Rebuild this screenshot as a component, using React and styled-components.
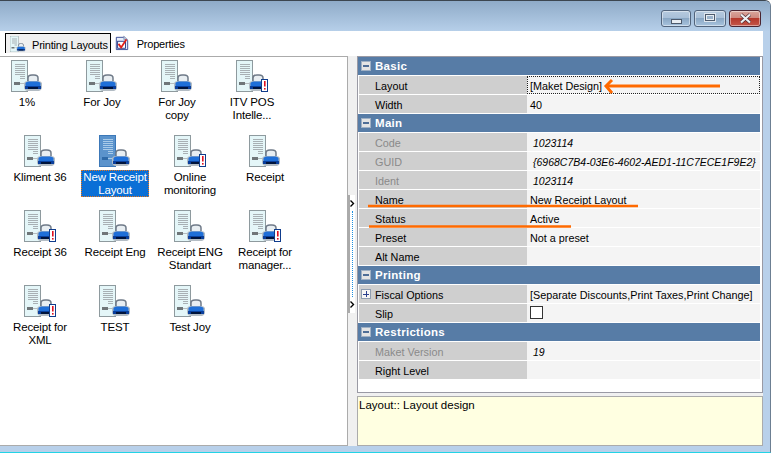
import React from 'react'
import styled, { createGlobalStyle } from 'styled-components'

const Global = createGlobalStyle`
  html, body { margin: 0; padding: 0; background: #fff; }
  body { font-family: 'Liberation Sans', Arial, sans-serif; font-size: 11.5px; color: #000; }
`

const Window = styled.div`
  width: 771px;
  height: 453px;
  position: relative;
  overflow: hidden;
  display: flex;
  flex-direction: column;
  background: #b8d0ea;
  border-top: 1px solid #3c4650;
  border-right: 1px solid #6c7f92;
  border-top-right-radius: 6px;
  box-sizing: border-box;
  border-bottom: 1px solid #22d3e6;
`

const TitleBar = styled.div`
  height: 30px;
  flex: none;
  display: flex;
  justify-content: flex-end;
  align-items: flex-start;
  padding: 9px 9px 0 0;
  box-sizing: border-box;
  gap: 3px;
  background: linear-gradient(#8fabc8, #b6cfe9);
`

const CaptionButton = styled.div`
  width: ${(p) => (p.$narrow ? 30 : 32)}px;
  height: 17px;
  box-sizing: border-box;
  border: 1px solid ${(p) => (p.$close ? '#4a2430' : '#52647c')};
  border-radius: 3px;
  display: flex;
  align-items: center;
  justify-content: center;
  box-shadow: inset 0 0 0 1px rgba(255, 255, 255, 0.45);
  background: ${(p) =>
    p.$close
      ? 'linear-gradient(#d9a69c 0%, #cf8a80 45%, #b5392c 50%, #c4574a 100%)'
      : 'linear-gradient(#b6cade 0%, #a9c0d8 45%, #8aa7c4 50%, #a8c3de 100%)'};
`

const MinGlyph = styled.span`
  width: 9px;
  height: 3px;
  margin-top: 5px;
  background: #e8edf2;
  border: 1px solid #4d5a6c;
`

const MaxGlyph = styled.span`
  width: 8px;
  height: 5px;
  border: 1px solid #4d5a6c;
  outline: 1px solid #e8edf2;
  outline-offset: -2px;
  box-shadow: 0 0 0 1px #dfe6ee;
  margin-bottom: 2px;
  background: #9cb3cb;
`

const CloseGlyph = styled.svg`
  width: 13px;
  height: 11px;
`

const Content = styled.div`
  width: 763px;
  height: 415px;
  flex: none;
  background: #fff;
  display: flex;
  flex-direction: column;
`

const TabStrip = styled.div`
  height: 22px;
  flex: none;
  display: flex;
  align-items: flex-end;
  padding-left: 5px;
  border-bottom: 3px solid;
  border-image: linear-gradient(#000 0 33%, #fff 33%) 3;
  box-sizing: content-box;
`

const Tab = styled.div`
  height: 20px;
  box-sizing: border-box;
  display: flex;
  align-items: center;
  gap: 6px;
  padding: 0 ${(p) => (p.$active ? 2 : 0)}px 0 4px;
  background: ${(p) => (p.$active ? '#f0f0f0' : 'transparent')};
  border: ${(p) => (p.$active ? '1px solid #000' : 'none')};
  border-bottom: none;
`

const TabLabel = styled.span`
  font-size: 11px;
  letter-spacing: -0.2px;
  padding-top: 2px;
  margin-left: ${(p) => p.$gap || 0}px;
`

const Body = styled.div`
  flex: 1;
  min-height: 0;
  display: flex;
  background: #f0f0f0;
`

const ListPanel = styled.div`
  width: 349px;
  flex: none;
  box-sizing: border-box;
  background: #fff;
  border: 1px solid #ababab;
  padding-top: 3px;
  display: flex;
  flex-direction: column;
  margin-left: -1px;
`

const IconRow = styled.div`
  height: 75px;
  flex: none;
  display: flex;
  gap: 23px;
  padding-left: ${(p) => p.$inset}px;
`

const Item = styled.div`
  width: 52px;
  display: flex;
  flex-direction: column;
  align-items: center;
`

const Label = styled.div`
  margin-top: 3px;
  width: max-content;
  flex: none;
  text-align: center;
  line-height: 13px;
  white-space: pre-line;
  font-size: 11.5px;
  letter-spacing: -0.15px;
  padding: 1px 2px 0;
  ${(p) =>
    p.$selected &&
    `
    background: #0a6fd6;
    color: #fff;
    outline: 1px dotted #e8761a;
    outline-offset: -1px;
  `}
`

const Splitter = styled.div`
  width: 9px;
  flex: none;
  display: flex;
  align-items: stretch;
  padding: 139px 2px 133px 0;
  box-sizing: border-box;
`

const SplitterTrack = styled.div`
  flex: 1;
  box-sizing: border-box;
  padding: 5px 0;
  display: flex;
  flex-direction: column;
  align-items: center;
  justify-content: space-between;
  border-left: 2px solid #ababab;
  background: #fff;
`

const SplitterDots = styled.div`
  flex: 1;
  width: 1px;
  margin: 4px 0;
  border-left: 1px dotted #1e8fe0;
`

const Chevron = styled.svg`
  width: 5px;
  height: 7px;
  flex: none;
`

const RightPanel = styled.div`
  flex: 1;
  min-width: 0;
  display: flex;
  flex-direction: column;
  gap: 3px;
`

const Grid = styled.div`
  height: 337px;
  flex: none;
  box-sizing: border-box;
  background: #fff;
  border: 1px solid #9a9aa4;
  padding: 0 2px 0 0;
`

const SectionRow = styled.div`
  height: 18px;
  margin-bottom: 1px;
  background: #577ca6;
  display: flex;
  align-items: center;
  gap: 4px;
  padding-left: 3px;
  color: #fff;
  font-weight: 700;
  font-size: 11.5px;
  letter-spacing: 0.3px;
  line-height: 19px;
`

const ToggleBox = styled.span`
  width: 8px;
  height: 8px;
  box-sizing: content-box;
  border: 1px solid ${(p) => (p.$light ? '#8f9db0' : '#9fb0c4')};
  background: ${(p) => (p.$light ? '#f6f6f6' : '#e4e4e4')};
  display: inline-flex;
  align-items: center;
  justify-content: center;
  position: relative;
  flex: none;
  &::before {
    content: '';
    width: 6px;
    height: 2px;
    background: ${(p) => (p.$light ? '#2a3f8f' : '#4e6d96')};
  }
  ${(p) =>
    p.$plus &&
    `
    margin-top: -2px;
    &::after {
      content: '';
      position: absolute;
      left: 4px;
      top: 1px;
      width: 1px;
      height: 6px;
      background: #2a3f8f;
    }
    &::before { height: 1px; }
  `}
`

const PropRow = styled.div`
  height: 18px;
  margin-bottom: 1px;
  display: flex;
  line-height: 16px;
  font-size: 10.8px;
`

const PropName = styled.div`
  width: 168px;
  flex: none;
  box-sizing: border-box;
  margin-left: 1px;
  padding: 2px 0 0 ${(p) => (p.$expand ? 2 : 16)}px;
  background: #cfcfcf;
  color: ${(p) => (p.$muted ? '#8a8a8a' : '#000')};
  display: flex;
  align-items: center;
  gap: 4px;
`

const PropValue = styled.div`
  flex: 1;
  min-width: 0;
  box-sizing: border-box;
  background: #f4f4f4;
  white-space: nowrap;
  padding-top: 2px;
  font-style: ${(p) => (p.$italic ? 'italic' : 'normal')};
  font-size: ${(p) => (p.$italic ? 10.5 : 10.8)}px;
  padding-left: ${(p) => (p.$italic ? 6 : 3)}px;
  ${(p) => p.$focused && 'outline: 1px dotted #222; outline-offset: -1px;'}
`

const CheckBox = styled.span`
  display: block;
  width: 11px;
  height: 11px;
  border: 1px solid #333;
  background: #fff;
`

const Description = styled.div`
  height: 50px;
  flex: none;
  box-sizing: border-box;
  background: #ffffe1;
  border: 1px solid #ababab;
  padding: 1px 1px;
  font-size: 11.5px;
  line-height: 14px;
`

const Annotation = styled.svg`
  position: absolute;
  left: 0;
  top: -1px;
  width: 771px;
  height: 453px;
  pointer-events: none;
`

/* report page + printer picture used for every layout in the list */
const LayoutIcon = ({ selected, badge, size = 32 }) => (
  <svg width={size} height={size} viewBox="0 0 32 32" style={{ flex: 'none', display: 'block' }}>
    <rect x="0.5" y="0.5" width="16" height="31" fill={selected ? '#6f9fd0' : '#d6f2f6'} stroke={selected ? '#3c78b8' : '#8e9a9e'} />
    <rect x="1" y="1" width="15" height="30" fill={selected ? '#5b93cc' : '#e4f6f8'} />
    {[4, 6, 8, 10, 12, 14, 16, 18].map((y, i) => (
      <rect key={y} x={i > 5 ? 9 : 4} y={y} width={i > 5 ? 5 : 10} height="1" fill={selected ? '#a9cbe9' : '#a8b0b4'} />
    ))}
    <rect x="3" y="22" width="6" height="3" fill={selected ? '#2f6aa8' : '#6f7679'} />
    <rect x="9" y="23" width="6" height="1" fill={selected ? '#a9cbe9' : '#b5bcbf'} />
    <path d="M17 21 v-3 q0-3 4-3 h2 q4 0 4 3 v3" fill="#e8eef2" stroke="#6f7a88" strokeWidth="1.5" />
    <path d="M13 23 q1-2 4-2 h10 q3 0 4 2 v5 q-1 3-3 3 h-12 q-2 0-3-3 z" fill="#b3bcc4" />
    <path d="M14.5 23 q1-1.5 3-1.5 h9 q2 0 3 1.5 v3 h-15 z" fill="#1f6fd8" />
    <rect x="14" y="26" width="16" height="3" fill="#0a3f9c" />
    <rect x="17" y="27" width="10" height="2" fill="#00143c" />
    {badge && (
      <g>
        <rect x="25.5" y="19.5" width="6" height="12" fill="#fff" stroke="#0f3c8c" />
        <rect x="28" y="21" width="1.6" height="5.5" fill="#e01020" />
        <rect x="28" y="28" width="1.6" height="1.6" fill="#e01020" />
      </g>
    )}
  </svg>
)

const PropertiesIcon = () => (
  <svg width="14" height="16" viewBox="0 0 16 18" style={{ flex: 'none' }}>
    <path d="M1.5 2.5 H10 L14.5 6 V16.5 H1.5 Z" fill="#e8eefa" stroke="#2a3f8f" />
    <path d="M10 1 L14.5 5 H10 Z" fill="#b8c4dc" stroke="#6d7ca0" strokeWidth="0.6" />
    <rect x="3" y="7" width="9" height="8" fill="#fff" stroke="#1c2f80" />
    <path d="M4 10 L7 14 L13 5" fill="none" stroke="#e0201a" strokeWidth="2" />
  </svg>
)

const ROWS = [
  {
    inset: 1,
    items: [
      { label: '1%' },
      { label: 'For Joy' },
      { label: 'For Joy\ncopy' },
      { label: 'ITV POS\nIntelle...', badge: true },
    ],
  },
  {
    inset: 14,
    items: [
      { label: 'Kliment 36' },
      { label: 'New Receipt\nLayout', selected: true },
      { label: 'Online\nmonitoring', badge: true },
      { label: 'Receipt' },
    ],
  },
  {
    inset: 14,
    items: [
      { label: 'Receipt 36', badge: true },
      { label: 'Receipt Eng' },
      { label: 'Receipt ENG\nStandart' },
      { label: 'Receipt for\nmanager...', badge: true },
    ],
  },
  {
    inset: 14,
    items: [{ label: 'Receipt for\nXML', badge: true }, { label: 'TEST' }, { label: 'Test Joy' }],
  },
]

const SECTIONS = [
  {
    title: 'Basic',
    rows: [
      { name: 'Layout', value: '[Maket Design]', focused: true },
      { name: 'Width', value: '40' },
    ],
  },
  {
    title: 'Main',
    rows: [
      { name: 'Code', value: '1023114', muted: true, italic: true },
      { name: 'GUID', value: '{6968C7B4-03E6-4602-AED1-11C7ECE1F9E2}', muted: true, italic: true },
      { name: 'Ident', value: '1023114', muted: true, italic: true },
      { name: 'Name', value: 'New Receipt Layout' },
      { name: 'Status', value: 'Active' },
      { name: 'Preset', value: 'Not a preset' },
      { name: 'Alt Name', value: '' },
    ],
  },
  {
    title: 'Printing',
    rows: [
      { name: 'Fiscal Options', value: '[Separate Discounts,Print Taxes,Print Change]', expand: true },
      { name: 'Slip', check: true },
    ],
  },
  {
    title: 'Restrictions',
    rows: [
      { name: 'Maket Version', value: '19', muted: true, italic: true },
      { name: 'Right Level', value: '' },
    ],
  },
]

const ChevronIcon = () => (
  <Chevron viewBox="0 0 5 7">
    <path d="M0.5 0.5 L3.5 3.5 L0.5 6.5" fill="none" stroke="#000" strokeWidth="1.4" />
  </Chevron>
)

export default function App() {
  return (
    <>
      <Global />
      <Window>
        <TitleBar>
          <CaptionButton $narrow>
            <MinGlyph />
          </CaptionButton>
          <CaptionButton>
            <MaxGlyph />
          </CaptionButton>
          <CaptionButton $close>
            <CloseGlyph viewBox="0 0 13 11">
              <path d="M2 1.5 L11 9.5 M11 1.5 L2 9.5" stroke="#4a2a30" strokeWidth="3.4" />
              <path d="M2 1.5 L11 9.5 M11 1.5 L2 9.5" stroke="#eceff2" strokeWidth="2.2" />
            </CloseGlyph>
          </CaptionButton>
        </TitleBar>
        <Content>
          <TabStrip>
            <Tab $active>
              <LayoutIcon size={16} />
              <TabLabel>Printing Layouts</TabLabel>
            </Tab>
            <Tab>
              <PropertiesIcon />
              <TabLabel $gap={2}>Properties</TabLabel>
            </Tab>
          </TabStrip>
          <Body>
            <ListPanel>
              {ROWS.map((row) => (
                <IconRow key={row.items[0].label} $inset={row.inset}>
                  {row.items.map((it) => (
                    <Item key={it.label}>
                      <LayoutIcon selected={it.selected} badge={it.badge} />
                      <Label $selected={it.selected}>{it.label}</Label>
                    </Item>
                  ))}
                </IconRow>
              ))}
            </ListPanel>
            <Splitter>
              <SplitterTrack>
                <ChevronIcon />
                <SplitterDots />
                <ChevronIcon />
              </SplitterTrack>
            </Splitter>
            <RightPanel>
              <Grid>
                {SECTIONS.map((sec) => (
                  <React.Fragment key={sec.title}>
                    <SectionRow>
                      <ToggleBox />
                      {sec.title}
                    </SectionRow>
                    {sec.rows.map((r) => (
                      <PropRow key={r.name}>
                        <PropName $muted={r.muted} $expand={r.expand}>
                          {r.expand && <ToggleBox $light $plus />}
                          {r.name}
                        </PropName>
                        <PropValue $italic={r.italic} $focused={r.focused}>
                          {r.check ? <CheckBox /> : r.value}
                        </PropValue>
                      </PropRow>
                    ))}
                  </React.Fragment>
                ))}
              </Grid>
              <Description>Layout:: Layout design</Description>
            </RightPanel>
          </Body>
        </Content>
        <Annotation viewBox="0 0 771 453">
          <g stroke="#ff6a00" fill="none">
            <path d="M720 86 H608" strokeWidth="3" />
            <path d="M612 80 L606 86 L612 93" strokeWidth="3" />
            <path d="M368 206 H638" strokeWidth="2.5" />
            <path d="M369 226.5 H571" strokeWidth="2.5" />
          </g>
        </Annotation>
      </Window>
    </>
  )
}
